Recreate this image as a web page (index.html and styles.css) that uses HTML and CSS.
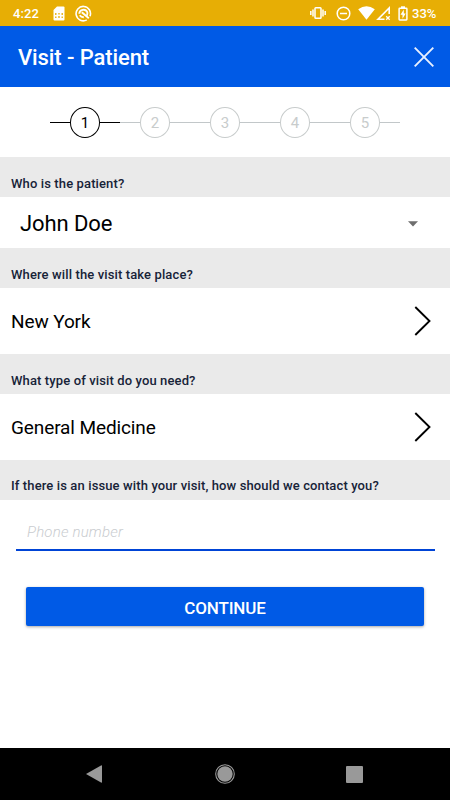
FILE: index.html
```html
<!DOCTYPE html>
<html lang="en">
<head>
<meta charset="utf-8">
<title>Visit - Patient</title>
<link rel="stylesheet" href="styles.css">
</head>
<body>
<div class="status">
  <span class="time">4:22</span>
  <svg class="sim" width="12" height="15" viewBox="0 0 12 15"><path fill="#fff" d="M4 .5h6.500q1 0 1 1v12q0 1-1 1h-9q-1 0-1-1V4z"/><path stroke="#e7ae05" stroke-width="1.300" d="M2.800 7v2M2.800 10.500V12M6 7v1.500M6 10v2M9.200 7v2M9.200 10.500V12"/></svg>
  <svg class="badge" width="17" height="17" viewBox="0 0 17 17" fill="none" stroke="#fff"><path stroke-width="1.600" d="M11.800 14.900A7.200 7.200 0 1 1 15 11.200"/><path stroke-width="1.900" d="M4.300 8.800A4.200 4.200 0 0 1 12.300 7.200Q12.800 9.500 11.700 10.800"/><path stroke-width="1.900" d="M6.800 7.300l7 5.900M4.800 10.300Q6 12.300 8.800 12.300"/></svg>
  <svg class="vibrate" width="16" height="14" viewBox="0 0 16 14" fill="none" stroke="#fff" stroke-width="1.500"><rect x="5" y="1.800" width="6" height="10.400" rx=".8"/><path d="M3 3.500v7M.8 5v4M13 3.500v7M15.200 5v4"/></svg>
  <svg class="dnd" width="15" height="15" viewBox="0 0 15 15" fill="none" stroke="#fff" stroke-width="1.500"><circle cx="7.500" cy="7.500" r="6.300"/><path d="M4 7.500h7"/></svg>
  <svg class="wifi" width="17" height="14" viewBox="0 0 17 14"><path fill="#fff" d="M.2 3.200Q8.500-2.600 16.800 3.200L8.500 13.700z"/></svg>
  <svg class="signal" width="15" height="15" viewBox="0 0 15 15" fill="none" stroke="#fff"><path stroke-width="1.600" d="M8.500 13.300H2L13.200 2v6"/><path stroke-width="1.300" d="M10.200 10.200l3.500 3.500M13.700 10.200l-3.500 3.500"/></svg>
  <svg class="battery" width="10" height="15" viewBox="0 0 10 15"><path fill="#fff" d="M3 .3h4V2H3z"/><rect x="1.100" y="2.300" width="7.800" height="11.600" rx=".6" fill="none" stroke="#fff" stroke-width="1.500"/><path fill="#fff" d="M5.800 3.500L2.500 8.800h2v4L7.700 7.400H5.800z"/></svg>
  <span class="percent">33%</span>
</div>
<header class="header">
  <h1>Visit - Patient</h1>
  <svg width="20" height="20" viewBox="0 0 20 20" fill="none" stroke="#e8f0ff" stroke-width="1.900"><path d="M.7.700l18.600 18.600M19.300.700L.7 19.300"/></svg>
</header>
<div class="stepper">
  <div class="step active"><span>1</span></div>
  <div class="step"><span>2</span></div>
  <div class="step"><span>3</span></div>
  <div class="step"><span>4</span></div>
  <div class="step"><span>5</span></div>
</div>
<main>
  <h2 class="label">Who is the patient?</h2>
  <div class="select"><span>John Doe</span><svg width="10" height="6" viewBox="0 0 10 6"><path fill="#6e6e6e" d="M0 .3h10L5 5.500z"/></svg></div>
  <h2 class="label">Where will the visit take place?</h2>
  <div class="row"><span>New York</span><svg width="18" height="30" viewBox="0 0 18 30" fill="none" stroke="#000" stroke-width="1.900"><path d="M1.300 1l14.200 14L1.300 29"/></svg></div>
  <h2 class="label">What type of visit do you need?</h2>
  <div class="row"><span>General Medicine</span><svg width="18" height="30" viewBox="0 0 18 30" fill="none" stroke="#000" stroke-width="1.900"><path d="M1.300 1l14.200 14L1.300 29"/></svg></div>
  <h2 class="label contact">If there is an issue with your visit, how should we contact you?</h2>
  <input class="phone" type="tel" placeholder="Phone number">
  <button class="continue">CONTINUE</button>
</main>
<nav class="nav">
  <svg width="16" height="18" viewBox="0 0 16 18"><path fill="#999" d="M0 9L15 .4q1-.4 1 .6v16q0 1-1 .6z"/></svg>
  <svg class="home" width="20" height="20" viewBox="0 0 20 20"><circle cx="10" cy="10" r="9.300" fill="none" stroke="#999" stroke-width="1.100"/><circle cx="10" cy="10" r="7.700" fill="#999"/></svg>
  <svg width="17" height="17" viewBox="0 0 17 17"><rect width="17" height="17" rx="1" fill="#999"/></svg>
</nav>
</body>
</html>
```
FILE: styles.css
```css
* { box-sizing: border-box; }
body {
  margin: 0;
  width: 450px;
  height: 800px;
  display: flex;
  flex-direction: column;
  overflow: hidden;
  background: #fff;
  color: #000;
  font-family: Roboto, sans-serif;
}
svg { display: block; flex: none; }
h1, h2 { margin: 0; font-weight: 500; }
.status {
  height: 26px;
  flex: none;
  display: flex;
  align-items: center;
  padding: 0 12px 0 13px;
  background: #e7ae05;
  color: #fff;
  font-size: 13px;
  font-weight: 500;
}
.time { width: 40px; letter-spacing: .1px; }
.badge { margin-left: 10px; }
.vibrate { margin-left: auto; }
.dnd { margin-left: 10px; }
.wifi { margin-left: 7px; }
.signal { margin-left: 1px; }
.battery { margin-left: 7px; }
.percent { width: 26px; margin-left: 4px; }
.header {
  height: 61px;
  flex: none;
  display: flex;
  align-items: center;
  justify-content: space-between;
  padding: 0 16px 0 18px;
  background: #005ae6;
  color: #fff;
}
.header h1 { font-size: 22px; line-height: 28px; padding-top: 2px; letter-spacing: -.1px; }
.stepper {
  height: 70px;
  flex: none;
  display: flex;
  justify-content: center;
  align-items: center;
  color: #c8cccc;
}
.step {
  width: 70px;
  display: flex;
  align-items: center;
}
.step::before, .step::after {
  content: "";
  flex: 1;
  height: 1px;
  background: #c2c7c9;
}
.step span {
  width: 30.500px;
  height: 31px;
  border: 1px solid #c8cccc;
  border-radius: 50%;
  text-align: center;
  font-size: 15px;
  line-height: 30px;
}
.step.active { color: #000; }
.step.active span { border-color: #000; }
.step.active::before, .step.active::after { background: #000; }
main { flex: 1; }
.label {
  height: 40px;
  padding: 18px 11px 0;
  background: #eaeaea;
  color: #172338;
  font-size: 13px;
  line-height: 18px;
  letter-spacing: .12px;
  white-space: nowrap;
}
.label.contact { padding-top: 17px; }
.select {
  height: 51px;
  display: flex;
  align-items: center;
  justify-content: space-between;
  padding: 2px 32px 0 20px;
  font-size: 22px;
  letter-spacing: -.1px;
}
.row {
  height: 66px;
  display: flex;
  align-items: center;
  justify-content: space-between;
  padding: 0 18px 0 11px;
  font-size: 19px;
  letter-spacing: -.11px;
}
.phone {
  display: block;
  width: 419px;
  height: 51px;
  margin: 0 0 0 16px;
  padding: 14px 11px 0;
  border: 0;
  border-bottom: 2px solid #0044d6;
  background: none;
  font: 300 15px Roboto, sans-serif;
  letter-spacing: .2px;
}
.phone::placeholder { color: #c9cccf; font-style: italic; }
.continue {
  display: block;
  width: 398px;
  height: 39px;
  margin: 36px 0 0 26px;
  padding: 2px 0 0;
  border: 0;
  border-radius: 2px;
  background: #005ae6;
  box-shadow: 0 1px 3px rgba(0, 0, 0, .35);
  color: #fff;
  font: 500 17px Roboto, sans-serif;
  letter-spacing: -.15px;
}
.nav {
  height: 52px;
  flex: none;
  display: flex;
  align-items: center;
  justify-content: space-between;
  padding: 0 87px 0 86px;
  background: #000;
}
.home { margin-left: 2px; }
```
